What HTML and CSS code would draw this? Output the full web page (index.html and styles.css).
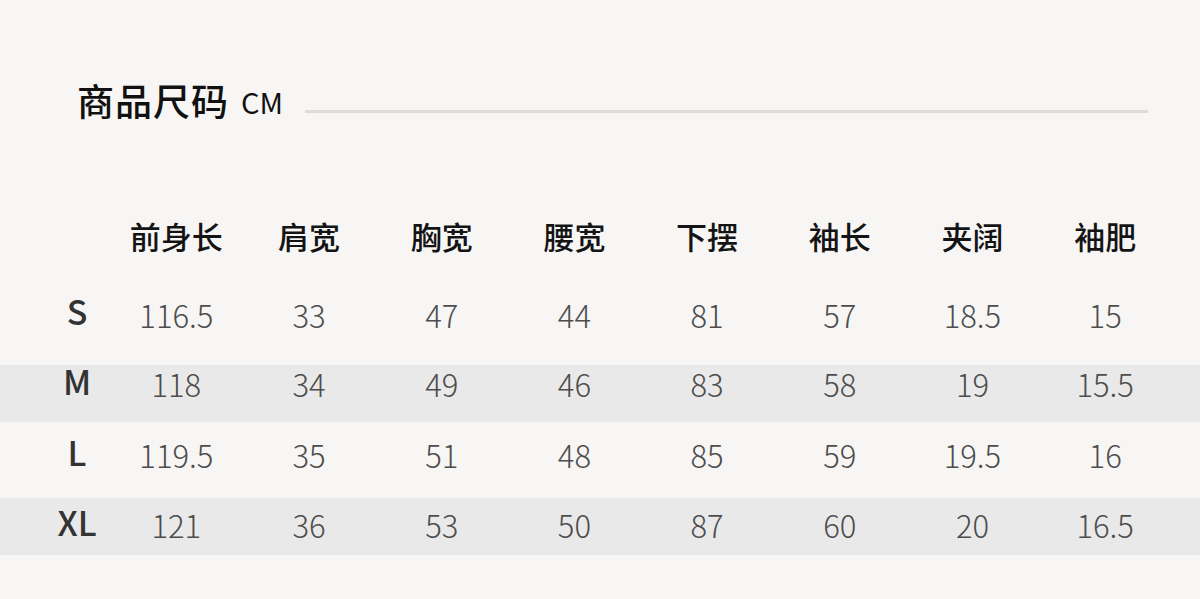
FILE: index.html
```html
<!DOCTYPE html>
<html lang="zh-CN">
<head>
<meta charset="utf-8">
<title>商品尺码</title>
<link rel="stylesheet" href="styles.css">
</head>
<body>
<div class="page">
  <div class="title-row">
    <h1 class="title">商品尺码</h1>
    <span class="unit">CM</span>
    <div class="rule"></div>
  </div>
  <div class="table">
    <div class="row head">
      <div class="cell label"></div>
      <div class="cell">前身长</div>
      <div class="cell">肩宽</div>
      <div class="cell">胸宽</div>
      <div class="cell">腰宽</div>
      <div class="cell">下摆</div>
      <div class="cell">袖长</div>
      <div class="cell">夹阔</div>
      <div class="cell">袖肥</div>
    </div>
    <div class="row data r-s">
      <div class="cell label">S</div>
      <div class="cell">116.5</div><div class="cell">33</div><div class="cell">47</div><div class="cell">44</div>
      <div class="cell">81</div><div class="cell">57</div><div class="cell">18.5</div><div class="cell">15</div>
    </div>
    <div class="row data band r-m">
      <div class="cell label">M</div>
      <div class="cell">118</div><div class="cell">34</div><div class="cell">49</div><div class="cell">46</div>
      <div class="cell">83</div><div class="cell">58</div><div class="cell">19</div><div class="cell">15.5</div>
    </div>
    <div class="row data r-l">
      <div class="cell label">L</div>
      <div class="cell">119.5</div><div class="cell">35</div><div class="cell">51</div><div class="cell">48</div>
      <div class="cell">85</div><div class="cell">59</div><div class="cell">19.5</div><div class="cell">16</div>
    </div>
    <div class="row data band r-xl">
      <div class="cell label">XL</div>
      <div class="cell">121</div><div class="cell">36</div><div class="cell">53</div><div class="cell">50</div>
      <div class="cell">87</div><div class="cell">60</div><div class="cell">20</div><div class="cell">16.5</div>
    </div>
  </div>
</div>
</body>
</html>
```

FILE: styles.css
```css
html, body {
  margin: 0;
  padding: 0;
  background: #f7f6f4;
}
body {
  width: 1200px;
  height: 599px;
  overflow: hidden;
  font-family: "Noto Sans CJK SC", "Noto Sans", sans-serif;
}
.page {
  padding-top: 77px;
}
.title-row {
  display: flex;
  align-items: center;
  height: 46px;
  padding-left: 77px;
  padding-right: 52px;
}
.title {
  margin: 0;
  font-size: 37px;
  font-weight: 500;
  color: #111;
  line-height: 46px;
  letter-spacing: 1px;
}
.unit {
  margin-left: 12px;
  font-size: 29px;
  color: #111;
  line-height: 46px;
  padding-top: 2px;
}
.rule {
  flex: 1;
  height: 3px;
  margin-left: 22px;
  margin-top: 23px;
  background: #dddcda;
}
.table {
  margin-top: 87px;
}
.row {
  display: grid;
  grid-template-columns: 66px repeat(8, 132.7px);
  padding-left: 44px;
  align-items: center;
  box-sizing: border-box;
}
.cell {
  text-align: center;
  white-space: nowrap;
}
.head {
  height: 50px;
  font-size: 31px;
  font-weight: 500;
  color: #141414;
}
.data {
  font-size: 31px;
  line-height: 31px;
  font-weight: 300;
  color: #4d4d4d;
}
.r-s { height: 105px; padding-top: 3px; }
.r-m { height: 57px; padding-bottom: 20px; }
.r-l { height: 76px; padding-bottom: 11px; }
.r-xl { height: 57px; padding-bottom: 4px; }
.band {
  background: #e9e9e9;
}
.label {
  font-size: 34px;
  line-height: 30px;
  font-weight: 500;
  color: #333;
  padding-bottom: 6px;
}
.head .label {
  padding-bottom: 0;
}
```
